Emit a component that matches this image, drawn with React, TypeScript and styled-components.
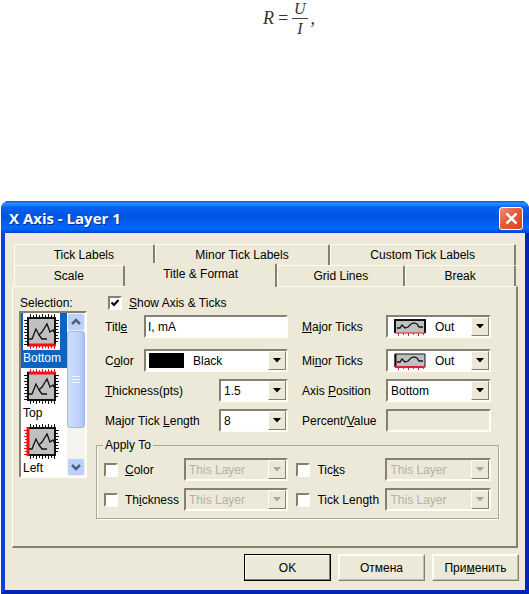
import React, { ReactNode } from 'react';
import styled, { createGlobalStyle, css } from 'styled-components';

const face = '#ece9d8';
const shadow = '#858170';
const light = '#fffef6';

const Global = createGlobalStyle`
  * { box-sizing: border-box; }
  body { margin: 0; background: #fff; color: #000; font: 12px/16px "Liberation Sans", Arial, sans-serif; }
  button, input, select { font: inherit; color: inherit; }
`;

const Formula = styled.p`
  height: 201px;
  margin: 0;
  padding-left: 49px;
  display: flex;
  justify-content: center;
  align-items: flex-start;
  gap: 3px;
  font: italic 18px/17px "Liberation Serif", "Times New Roman", serif;
  color: #333;
`;
const Term = styled.span`
  padding-top: 10px;
`;
const Fraction = styled.span`
  display: flex;
  flex-direction: column;
  text-align: center;
  font-size: 16px;
  line-height: 20px;
  span:first-child { line-height: 18px; border-bottom: 1px solid #444; padding: 0 2px; }
`;

const Dialog = styled.section`
  margin-left: 1px;
  border: 4px solid #0b45d8;
  border-top: 0;
  border-right-color: #0226b4;
  border-bottom-color: #0226b4;
  border-radius: 8px 8px 0 0;
  background: #0b45d8;
`;
const TitleBar = styled.header`
  height: 32px;
  margin: 0 -4px;
  padding: 2px 6px 0 8px;
  display: flex;
  align-items: center;
  justify-content: space-between;
  border-radius: 8px 8px 0 0;
  background: linear-gradient(#0a5ad8 0, #2a90ff 8%, #0562ee 20%, #0054e3 50%, #0166ff 85%, #0148d0 100%);
`;
const Title = styled.h1`
  margin: 0;
  font: bold 15px/20px "Open Sans", "Liberation Sans", sans-serif;
  color: #fff;
  text-shadow: 1px 1px #0a2f8c;
`;
const Close = styled.button`
  width: 24px;
  height: 23px;
  padding: 0;
  display: grid;
  place-items: center;
  border: 1px solid #fff;
  border-radius: 3px;
  background: linear-gradient(135deg, #f0917a, #e85a38 45%, #d8441c);
`;

const Body = styled.div`
  padding: 11px 7px 9px;
  background: ${face};
`;
const TabRow = styled.div<{ $columns: string }>`
  display: grid;
  grid-template-columns: ${p => p.$columns};
  margin: 0 2px;
`;
const Tab = styled.button<{ $active?: boolean }>`
  height: 21px;
  padding: 0;
  border: 1px solid ${light};
  border-right: 2px solid ${shadow};
  border-bottom: 0;
  border-radius: 2px 2px 0 0;
  background: ${face};
  ${p => p.$active && css`
    position: relative;
    height: 24px;
    margin: -2px 0 -1px;
    padding-bottom: 4px;
    border-top-color: ${face};
    border-left-color: ${face};
  `}
`;
const Sheet = styled.div`
  min-height: 262px;
  padding: 8px 25px 26px 7px;
  display: grid;
  grid-template-columns: 67px 1fr;
  gap: 11px;
  border: 1px solid ${light};
  border-right: 2px solid ${shadow};
  border-bottom: 2px solid ${shadow};
`;

const sunken = css`
  border: 2px solid;
  border-color: ${shadow} ${light} ${light} ${shadow};
`;
const ListTitle = styled.div`
  height: 16px;
`;
const ListFrame = styled.div`
  ${sunken}
  height: 167px;
  margin-left: -1px;
  display: flex;
  justify-content: space-between;
  background: #fff;
  overflow: hidden;
`;
const Options = styled.ul`
  width: 47px;
  margin: 0;
  padding: 0;
  list-style: none;
`;
const Option = styled.li<{ $selected?: boolean }>`
  height: 55px;
  padding-left: 2px;
  background: ${p => (p.$selected ? '#0f63c0' : '#fff')};
  color: ${p => (p.$selected ? '#fff' : '#000')};
  svg { display: block; background: #fff; }
`;
const Scrollbar = styled.div`
  width: 18px;
  display: flex;
  flex-direction: column;
  background: #f4f3ee;
`;
const ScrollButton = styled.button`
  height: 18px;
  padding: 0;
  display: grid;
  place-items: center;
  border: 1px solid #e8efff;
  border-radius: 3px;
  background: #bdd0fa;
`;
const Thumb = styled.div`
  height: 97px;
  margin-bottom: auto;
  display: grid;
  place-items: center;
  border: 1px solid #9db9ee;
  border-radius: 3px;
  background: linear-gradient(90deg, #cfdefe, #bcd0fb 70%, #a9c2f5);
`;

const Form = styled.div`
  display: flex;
  flex-direction: column;
  min-width: 0;
`;
const Check = styled.label`
  display: flex;
  align-items: center;
  gap: 7px;
  height: 16px;
  white-space: nowrap;
  input {
    ${sunken}
    appearance: none;
    width: 14px;
    height: 14px;
    margin: 0;
    flex: none;
    background: #fff;
  }
  input:checked {
    background: #fff url("data:image/svg+xml,%3Csvg xmlns='http://www.w3.org/2000/svg' viewBox='0 0 10 10'%3E%3Cpath d='M1.500 4.500L4 7l4.500-5' fill='none' stroke='black' stroke-width='2'/%3E%3C/svg%3E") center / 10px 10px;
  }
`;
const Master = styled.div`
  padding-left: 10px;
`;
const Columns = styled.div`
  padding: 4px 0 0 7px;
  display: grid;
  grid-template-columns: 183fr 189fr;
  column-gap: 14px;
`;
const Fields = styled.div`
  display: flex;
  flex-direction: column;
  gap: 7px;
`;
const Field = styled.div<{ $label: number; $first?: boolean }>`
  display: grid;
  grid-template-columns: ${p => p.$label}px 1fr;
  align-items: center;
  margin-bottom: ${p => (p.$first ? 4 : 0)}px;
  white-space: nowrap;
`;
const TextBox = styled.input`
  ${sunken}
  width: 100%;
  height: 23px;
  padding: 0 2px;
  border-radius: 0;
  background: #fff;
  &:disabled { background: ${face}; }
`;
const ComboFrame = styled.div<{ $disabled?: boolean }>`
  ${sunken}
  height: 23px;
  min-width: 0;
  display: grid;
  grid-template-columns: auto 1fr 18px;
  background: ${p => (p.$disabled ? face : '#fff')};
  color: ${p => (p.$disabled ? '#b5b2a0' : '#000')};
`;
const Select = styled.select<{ $pad: number }>`
  grid-area: 1 / 2 / 2 / 4;
  appearance: none;
  min-width: 0;
  padding: 0 18px 0 ${p => p.$pad}px;
  border: 0;
  border-radius: 0;
  background: transparent;
  opacity: 1;
`;
const Arrow = styled.span`
  grid-area: 1 / 3;
  display: grid;
  place-items: center;
  border: 1px solid;
  border-color: ${light} ${shadow} ${shadow} ${light};
  background: ${face};
  pointer-events: none;
`;
const Swatch = styled.span`
  width: 35px;
  height: 15px;
  margin: 2px 0 0 3px;
  background: #000;
`;
const IconSlot = styled.span`
  margin: 2px 0 0 6px;
  height: 17px;
`;
const Group = styled.fieldset`
  margin: 5px -8px 0 -2px;
  padding: 0 7px 7px 7px;
  border: 1px solid #aca899;
  box-shadow: inset 1px 0 ${light}, 1px 1px ${light};
  legend { padding: 0 2px; margin-left: -1px; height: 16px; }
`;
const GroupGrid = styled.div`
  display: grid;
  grid-template-columns: 80px 102fr 97px 103fr;
  row-gap: 7px;
  align-items: center;
  margin-top: 5px;
`;
const Indent = styled.div`
  padding-left: 8px;
`;
const Footer = styled.footer`
  display: flex;
  justify-content: flex-end;
  gap: 7px;
  margin-right: -1px;
  padding-top: 6px;
`;
const Push = styled.button<{ $primary?: boolean }>`
  width: 87px;
  height: 27px;
  padding: 0;
  border: 1px solid;
  border-color: ${p => (p.$primary ? '#000' : `${light} ${shadow} ${shadow} ${light}`)};
  box-shadow: inset -1px -1px ${p => (p.$primary ? shadow : '#c3bfae')}, inset 1px 1px ${light};
  background: ${face};
`;

type Side = 'Bottom' | 'Top' | 'Left';
const Chip = ({ side }: { side: Side }) => {
  const tone = (s: Side) => (s === side ? '#f01018' : '#111');
  const heavy = (s: Side) => (s === side ? 3 : 2);
  return (
    <svg width="37" height="37" viewBox="0 0 37 37" aria-hidden="true">
      <rect x="5" y="5" width="27" height="27" fill="#c0c0c0" />
      <path d="M7.500 1v4M10.500 2v3M13.500 1v4M16.500 2v3M19.500 1v4M22.500 2v3M25.500 1v4M28.500 2v3M31.500 1v4" stroke={tone('Top')} />
      <path d="M7.500 32v4M10.500 32v3M13.500 32v4M16.500 32v3M19.500 32v4M22.500 32v3M25.500 32v4M28.500 32v3M31.500 32v4" stroke={tone('Bottom')} />
      <path d="M1 7.500h4M2 10.500h3M1 13.500h4M2 16.500h3M1 19.500h4M2 22.500h3M1 25.500h4M2 28.500h3M1 31.500h4" stroke={tone('Left')} />
      <path d="M32 7.500h4M32 10.500h3M32 13.500h4M32 16.500h3M32 19.500h4M32 22.500h3M32 25.500h4M32 28.500h3" stroke="#111" />
      <path d="M32 4v29" stroke="#111" strokeWidth="2" />
      <path d="M4 5h29" stroke={tone('Top')} strokeWidth={heavy('Top')} />
      <path d="M4 32h29" stroke={tone('Bottom')} strokeWidth={heavy('Bottom')} />
      <path d="M5 4v29" stroke={tone('Left')} strokeWidth={heavy('Left')} />
      <path d="M6 26h3l4-10 3 6 3-3 5-8 3 8 3-2 2 4M16 22l3 4h5" fill="none" stroke="#111" strokeWidth="1.300" />
    </svg>
  );
};
const TicksIcon = ({ minor }: { minor?: boolean }) => (
  <svg width="32" height="17" viewBox="0 0 32 17" aria-hidden="true">
    <rect x="1" y="1" width="30" height="13" fill="#c0c0c0" />
    <path d="M1 14V1h30v13" fill="none" stroke="#111" strokeWidth={minor ? 1 : 2} />
    {minor && <path d="M1.500 1v13" stroke="#111" strokeWidth="2" />}
    <path d="M3 9h3l2-3 3 3 3-1 3-3 3-1 3 1 2 3h4" fill="none" stroke="#111" strokeWidth="1.300" />
    <path d="M1 14h30" stroke="#e0202c" strokeWidth={minor ? 2 : 1} />
    <path d="M4.500 14v3M9.500 14v2M14.500 14v3M19.500 14v2M24.500 14v3M29.500 14v2" stroke="#e0202c" />
  </svg>
);
const Chevron = ({ down }: { down?: boolean }) => (
  <svg width="10" height="8" viewBox="0 0 10 8" aria-hidden="true">
    <path d={down ? 'M1 2l4 4 4-4' : 'M1 6l4-4 4 4'} fill="none" stroke="#4d6185" strokeWidth="2.500" />
  </svg>
);

type ComboProps = { id?: string; label?: string; value: string; art?: ReactNode; pad?: number; disabled?: boolean };
const Combo = ({ id, label, value, art, pad = 3, disabled }: ComboProps) => (
  <ComboFrame $disabled={disabled}>
    {art}
    <Select id={id} aria-label={label} $pad={pad} disabled={disabled} defaultValue={value}>
      <option>{value}</option>
    </Select>
    <Arrow>
      <svg width="8" height="5" viewBox="0 0 8 5" aria-hidden="true">
        <path d="M0 0h8L4 4.500z" fill={disabled ? '#aca899' : '#000'} />
      </svg>
    </Arrow>
  </ComboFrame>
);

const sides: Side[] = ['Bottom', 'Top', 'Left'];

export default function App() {
  return (
    <>
      <Global />
      <Formula>
        <Term>R</Term>
        <Term>=</Term>
        <Fraction><span>U</span><span>I</span></Fraction>
        <Term>,</Term>
      </Formula>
      <Dialog role="dialog" aria-labelledby="dialog-title">
        <TitleBar>
          <Title id="dialog-title">X Axis - Layer 1</Title>
          <Close aria-label="Close">
            <svg width="13" height="13" viewBox="0 0 13 13" aria-hidden="true">
              <path d="M1.500 1.500l10 10M11.500 1.500l-10 10" stroke="#fff" strokeWidth="2.500" />
            </svg>
          </Close>
        </TitleBar>
        <Body>
          <TabRow $columns="141fr 176fr 186fr">
            <Tab>Tick Labels</Tab>
            <Tab>Minor Tick Labels</Tab>
            <Tab>Custom Tick Labels</Tab>
          </TabRow>
          <TabRow $columns="111fr 153fr 128fr 111fr">
            <Tab>Scale</Tab>
            <Tab $active>Title &amp; Format</Tab>
            <Tab>Grid Lines</Tab>
            <Tab>Break</Tab>
          </TabRow>
          <Sheet>
            <div>
              <ListTitle id="selection">Selection:</ListTitle>
              <ListFrame>
                <Options role="listbox" aria-labelledby="selection">
                  {sides.map(side => (
                    <Option key={side} role="option" aria-selected={side === 'Bottom'} $selected={side === 'Bottom'}>
                      <Chip side={side} />
                      {side}
                    </Option>
                  ))}
                </Options>
                <Scrollbar>
                  <ScrollButton aria-label="Scroll up"><Chevron /></ScrollButton>
                  <Thumb>
                    <svg width="8" height="8" viewBox="0 0 8 8" aria-hidden="true">
                      <path d="M0 .5h8M0 3.500h8M0 6.500h8" stroke="#eef4ff" />
                    </svg>
                  </Thumb>
                  <ScrollButton aria-label="Scroll down"><Chevron down /></ScrollButton>
                </Scrollbar>
              </ListFrame>
            </div>
            <Form>
              <Master>
                <Check><input type="checkbox" defaultChecked /><span><u>S</u>how Axis &amp; Ticks</span></Check>
              </Master>
              <Columns>
                <Fields>
                  <Field $label={39} $first>
                    <label htmlFor="title">Titl<u>e</u></label>
                    <TextBox id="title" defaultValue="I, mA" />
                  </Field>
                  <Field $label={39}>
                    <label htmlFor="color">C<u>o</u>lor</label>
                    <Combo id="color" value="Black" art={<Swatch />} pad={9} />
                  </Field>
                  <Field $label={114}>
                    <label htmlFor="thickness"><u>T</u>hickness(pts)</label>
                    <Combo id="thickness" value="1.5" />
                  </Field>
                  <Field $label={114}>
                    <label htmlFor="length">Major Tick <u>L</u>ength</label>
                    <Combo id="length" value="8" />
                  </Field>
                </Fields>
                <Fields>
                  <Field $label={84} $first>
                    <label htmlFor="major"><u>M</u>ajor Ticks</label>
                    <Combo id="major" value="Out" art={<IconSlot><TicksIcon /></IconSlot>} pad={9} />
                  </Field>
                  <Field $label={84}>
                    <label htmlFor="minor">Mi<u>n</u>or Ticks</label>
                    <Combo id="minor" value="Out" art={<IconSlot><TicksIcon minor /></IconSlot>} pad={9} />
                  </Field>
                  <Field $label={84}>
                    <label htmlFor="position">Axis <u>P</u>osition</label>
                    <Combo id="position" value="Bottom" />
                  </Field>
                  <Field $label={84}>
                    <label htmlFor="percent">Percent/<u>V</u>alue</label>
                    <TextBox id="percent" disabled />
                  </Field>
                </Fields>
              </Columns>
              <Group>
                <legend>Apply To</legend>
                <GroupGrid>
                  <Check><input type="checkbox" /><span><u>C</u>olor</span></Check>
                  <Combo label="Color scope" value="This Layer" disabled />
                  <Indent><Check><input type="checkbox" /><span>Tic<u>k</u>s</span></Check></Indent>
                  <Combo label="Ticks scope" value="This Layer" disabled />
                  <Check><input type="checkbox" /><span>Th<u>i</u>ckness</span></Check>
                  <Combo label="Thickness scope" value="This Layer" disabled />
                  <Indent><Check><input type="checkbox" /><span>Tick Len<u>g</u>th</span></Check></Indent>
                  <Combo label="Tick length scope" value="This Layer" disabled />
                </GroupGrid>
              </Group>
            </Form>
          </Sheet>
          <Footer>
            <Push $primary>OK</Push>
            <Push>Отмена</Push>
            <Push>При<u>м</u>енить</Push>
          </Footer>
        </Body>
      </Dialog>
    </>
  );
}
